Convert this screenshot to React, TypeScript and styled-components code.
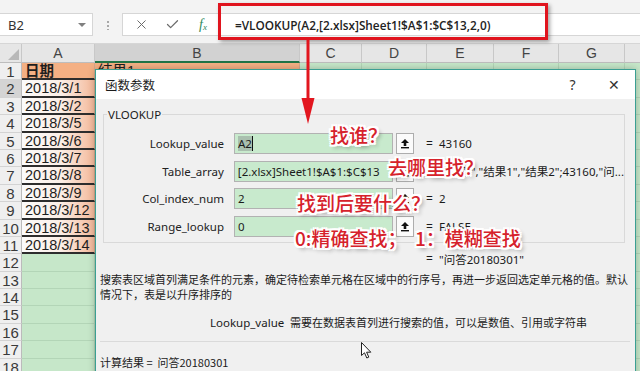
import React from "react";
import styled, { createGlobalStyle } from "styled-components";
import { X, Check } from "lucide-react";

const GlobalStyle = createGlobalStyle`
  html, body {
    margin: 0;
    padding: 0;
    background: #fff;
  }
  body {
    width: 640px;
    height: 371px;
    overflow: hidden;
    font-family: "Noto Sans", "Noto Sans CJK SC", sans-serif;
  }
`;

const Page = styled.div`
  position: relative;
  width: 640px;
  height: 371px;
  overflow: hidden;
  background: #c6e7c9;
`;

/* ---------- formula bar ---------- */

const TopBar = styled.div`
  height: 44px;
  box-sizing: border-box;
  padding-top: 13px;
  background: #f3f3f3;
  border-bottom: 1px solid #d6d6d6;
  display: flex;
  align-items: flex-start;
`;

const NameBox = styled.div`
  width: 93px;
  height: 23px;
  box-sizing: border-box;
  background: #fff;
  border: 1px solid #d6d6d6;
  border-left: none;
  display: flex;
  align-items: center;
  justify-content: space-between;
  padding: 0 6px 0 8px;
  font-size: 13px;
  color: #333;
`;

const DropCaret = styled.span`
  width: 0;
  height: 0;
  border-left: 4px solid transparent;
  border-right: 4px solid transparent;
  border-top: 4px solid #808080;
`;

const Grip = styled.div`
  width: 2px;
  height: 10px;
  margin: 7px 0 0 14px;
  background: radial-gradient(circle, #a8a8a8 0.8px, transparent 1px) 0 0 / 2px 4px repeat-y;
`;

const FormulaBox = styled.div`
  flex: 1;
  height: 23px;
  margin-left: 13px;
  box-sizing: border-box;
  background: #fff;
  border: 1px solid #d6d6d6;
  border-right: none;
  display: flex;
  align-items: center;
  padding-left: 10px;
`;

const IconSlot = styled.span<{ $gap?: number }>`
  width: 16px;
  display: flex;
  justify-content: center;
  margin-right: ${({ $gap }) => $gap ?? 15}px;
  color: #6b6b6b;
`;

const Fx = styled.span`
  font-family: "Liberation Serif", serif;
  font-style: italic;
  font-size: 14px;
  color: #2f8a5c;
  & sub {
    font-size: 9px;
    vertical-align: -1px;
  }
`;

const FormulaText = styled.span`
  margin-left: 24px;
  font-family: "Open Sans", "Noto Sans", sans-serif;
  font-weight: 600;
  font-size: 11.8px;
  color: #222;
  white-space: nowrap;
`;

const RedFrame = styled.div`
  position: absolute;
  left: 218px;
  top: 3px;
  width: 330px;
  height: 37px;
  box-sizing: border-box;
  border: 3px solid #e0141e;
  box-shadow: 2px 2px 4px rgba(0, 0, 0, 0.35);
`;

/* ---------- sheet ---------- */

const Sheet = styled.div`
  display: grid;
  grid-template-columns: 22px 73px 205px 62px 65px 67px 65px 66px 40px;
  grid-template-rows: 19px;
  grid-auto-rows: 17.4px;
  font-family: "Liberation Sans", "Noto Sans CJK SC", sans-serif;
`;

const Corner = styled.div`
  background: #e6e6e6;
  border-right: 1px solid #c8c8c8;
  border-bottom: 1px solid #bdbdbd;
  position: relative;
  &::after {
    content: "";
    position: absolute;
    right: 2px;
    bottom: 2px;
    border-left: 11px solid transparent;
    border-bottom: 11px solid #b8b8b8;
  }
`;

const ColHead = styled.div<{ $active?: boolean }>`
  background: ${({ $active }) => ($active ? "#d2d2d2" : "#e6e6e6")};
  border-right: 1px solid #c8c8c8;
  border-bottom: ${({ $active }) => ($active ? "2px solid #217346" : "1px solid #bdbdbd")};
  box-sizing: border-box;
  font-size: 14px;
  color: #444;
  text-align: center;
  line-height: 19px;
`;

const RowHead = styled.div<{ $active?: boolean }>`
  background: ${({ $active }) => ($active ? "#d4d4d4" : "#efefef")};
  border-right: 1px solid #bbb;
  border-bottom: 1px solid #d3d3d3;
  box-sizing: border-box;
  font-size: 15px;
  color: #3a3a3a;
  text-align: center;
  line-height: 17px;
  overflow: hidden;
`;

type Fill = "orange" | "fade" | "green" | "white";

const fills: Record<Fill, string> = {
  orange: "#f4b084",
  fade: "linear-gradient(to right, #fbfbfb 0%, #fbeee6 55%, #f4b99a 100%)",
  green: "#c6e7c9",
  white: "#ffffff",
};

const Cell = styled.div<{ $fill: Fill; $strong?: boolean; $ruled?: boolean }>`
  background: ${({ $fill }) => fills[$fill]};
  border-right: 1px solid ${({ $fill }) => ($fill === "green" ? "#b3d5b7" : "#d4a98d")};
  border-bottom: ${({ $ruled, $fill }) =>
    $ruled ? "2px solid #2d2d2d" : `1px solid ${$fill === "green" ? "#b3d5b7" : "#d4a98d"}`};
  box-sizing: border-box;
  padding-left: 3px;
  font-size: 14.5px;
  font-weight: ${({ $strong }) => ($strong ? 700 : 400)};
  color: #1e1e1e;
  line-height: 16px;
  white-space: nowrap;
  overflow: hidden;
`;

/* ---------- dialog ---------- */

const Dialog = styled.div`
  position: absolute;
  left: 95px;
  top: 69px;
  width: 541px;
  height: 320px;
  box-sizing: border-box;
  border: 1px solid #3b9f93;
  background: #f0f0f0;
  box-shadow: 0 0 7px rgba(0, 0, 0, 0.25);
  display: flex;
  flex-direction: column;
  color: #1b1b1b;
`;

const TitleBar = styled.div`
  height: 29px;
  flex-shrink: 0;
  background: #fff;
  display: flex;
  align-items: center;
  padding-left: 9px;
  font-family: "Noto Sans CJK SC", sans-serif;
  font-size: 12.5px;
`;

const TitleButtons = styled.div`
  margin-left: auto;
  display: flex;
  padding-right: 1px;
`;

const TitleButton = styled.span`
  width: 41px;
  text-align: center;
  font-family: "Noto Sans", sans-serif;
  font-size: 14px;
  color: #333;
`;

const Body = styled.div`
  padding: 0 10px 0 4px;
  display: flex;
  flex-direction: column;
`;

const GroupBox = styled.div`
  margin: 15px 0 0 3px;
  height: 129px;
  box-sizing: border-box;
  border: 1px solid #d9d9d9;
`;

const GroupTitle = styled.div`
  width: fit-content;
  margin: -8px 0 0 3px;
  padding: 0 1px;
  background: #f0f0f0;
  font-size: 11.5px;
  line-height: 16px;
`;

const ParamList = styled.div`
  margin-top: 10px;
  display: flex;
  flex-direction: column;
  gap: 6.5px;
`;

const ParamRow = styled.div`
  display: flex;
  align-items: center;
  height: 21px;
`;

const ParamLabel = styled.span`
  width: 120px;
  text-align: right;
  font-size: 11.5px;
  color: #222;
`;

const ParamInput = styled.div`
  margin-left: 10px;
  width: 159px;
  height: 21px;
  box-sizing: border-box;
  border: 1px solid #b2b2b2;
  background: #c8eacd;
  padding: 0 3px;
  display: flex;
  align-items: center;
  font-size: 11.5px;
  white-space: nowrap;
  overflow: hidden;
`;

const Selected = styled.span`
  background: #a9bfae;
  border-right: 1px solid #111;
`;

const RefButton = styled.span`
  margin-left: 3px;
  width: 18px;
  height: 21px;
  box-sizing: border-box;
  border: 1px solid #adadad;
  background: #fbfbfb;
  display: flex;
  align-items: center;
  justify-content: center;
`;

const Eq = styled.span<{ $flush?: boolean }>`
  margin-left: ${({ $flush }) => ($flush ? 0 : 12)}px;
  width: 13px;
  font-size: 12px;
`;

const ParamValue = styled.span`
  font-family: "Noto Sans", "Noto Sans CJK SC", sans-serif;
  font-size: 11.5px;
  white-space: nowrap;
`;

const ResultLine = styled.div`
  margin-top: 8px;
  padding-left: 326px;
  height: 15px;
  display: flex;
  align-items: center;
  font-size: 11.5px;
`;

const Description = styled.div`
  margin-top: 6px;
  font-family: "Noto Sans CJK SC", sans-serif;
  font-size: 11px;
  line-height: 14.5px;
  white-space: nowrap;
`;

const ArgHelp = styled.div`
  margin-top: 14px;
  padding-left: 110px;
  display: flex;
  align-items: center;
  height: 14px;
  white-space: nowrap;
`;

const ArgName = styled.span`
  width: 80px;
  font-size: 11.5px;
`;

const ArgText = styled.span`
  font-family: "Noto Sans CJK SC", sans-serif;
  font-size: 11px;
`;

const Divider = styled.div`
  margin: 12px -5px 0 0;
  height: 1px;
  background: #dadada;
`;

const Total = styled.div`
  margin-top: 13px;
  font-family: "Noto Sans CJK SC", sans-serif;
  font-size: 11px;
  line-height: 14px;
  white-space: pre;
`;

/* ---------- annotations ---------- */

const Note = styled.div<{ $x: number; $y: number }>`
  position: absolute;
  left: ${({ $x }) => $x}px;
  top: ${({ $y }) => $y}px;
  font-family: "Noto Sans CJK SC", sans-serif;
  font-weight: 500;
  font-size: 19px;
  line-height: 20px;
  color: #d6222b;
  white-space: pre;
  text-shadow:
    2px 0 0 #fff, -2px 0 0 #fff, 0 2px 0 #fff, 0 -2px 0 #fff,
    2px 2px 0 #fff, -2px -2px 0 #fff, 2px -2px 0 #fff, -2px 2px 0 #fff,
    3px 3px 4px rgba(0, 0, 0, 0.45);
`;

const Overlay = styled.svg<{ $x: number; $y: number }>`
  position: absolute;
  left: ${({ $x }) => $x}px;
  top: ${({ $y }) => $y}px;
  overflow: visible;
`;

const dates = [
  "2018/3/1",
  "2018/3/2",
  "2018/3/5",
  "2018/3/6",
  "2018/3/7",
  "2018/3/8",
  "2018/3/9",
  "2018/3/12",
  "2018/3/13",
  "2018/3/14",
];

const colNames = ["A", "B", "C", "D", "E", "F", "G", ""];

function SheetGrid() {
  const rows: React.ReactNode[] = [];
  for (let r = 1; r <= 18; r++) {
    rows.push(
      <RowHead key={`h${r}`} $active={r === 2}>
        {r}
      </RowHead>
    );
    for (let c = 0; c < 8; c++) {
      let fill: Fill = "green";
      let text = "";
      let strong = false;
      let ruled = false;
      if (r === 1 && c === 0) {
        fill = "orange";
        text = "日期";
        strong = true;
        ruled = true;
      } else if (r === 1 && c === 1) {
        fill = "orange";
        text = "结果1";
      } else if (r <= 11 && c === 0) {
        fill = "fade";
        text = dates[r - 2];
        ruled = true;
      } else if (r <= 11 && c === 1) {
        fill = "white";
      }
      rows.push(
        <Cell key={`${r}-${c}`} $fill={fill} $strong={strong} $ruled={ruled}>
          {text}
        </Cell>
      );
    }
  }
  return (
    <Sheet>
      <Corner />
      {colNames.map((n, i) => (
        <ColHead key={i} $active={n === "B"}>
          {n}
        </ColHead>
      ))}
      {rows}
    </Sheet>
  );
}

function RefIcon() {
  return (
    <svg width="10" height="11" viewBox="0 0 10 11">
      <path d="M5 1 L9 5 H6.3 V8 H3.7 V5 H1 Z" fill="#111" />
      <rect x="1" y="9" width="8" height="1.4" fill="#111" />
    </svg>
  );
}

const params = [
  { label: "Lookup_value", input: "A2", value: "43160" },
  { label: "Table_array", input: "[2.xlsx]Sheet1!$A$1:$C$13", value: '{"日期","结果1","结果2";43160,"问...' },
  { label: "Col_index_num", input: "2", value: "2" },
  { label: "Range_lookup", input: "0", value: "FALSE" },
];

function FunctionDialog() {
  return (
    <Dialog>
      <TitleBar>
        函数参数
        <TitleButtons>
          <TitleButton>?</TitleButton>
          <TitleButton>✕</TitleButton>
        </TitleButtons>
      </TitleBar>
      <Body>
        <GroupBox>
          <GroupTitle>VLOOKUP</GroupTitle>
          <ParamList>
            {params.map((p, i) => (
              <ParamRow key={p.label}>
                <ParamLabel>{p.label}</ParamLabel>
                <ParamInput>{i === 0 ? <Selected>{p.input}</Selected> : p.input}</ParamInput>
                <RefButton>
                  <RefIcon />
                </RefButton>
                <Eq>=</Eq>
                <ParamValue>{p.value}</ParamValue>
              </ParamRow>
            ))}
          </ParamList>
        </GroupBox>
        <ResultLine>
          <Eq $flush>=</Eq>
          <ParamValue>"问答20180301"</ParamValue>
        </ResultLine>
        <Description>
          搜索表区域首列满足条件的元素，确定待检索单元格在区域中的行序号，再进一步返回选定单元格的值。默认
          <br />
          情况下，表是以升序排序的
        </Description>
        <ArgHelp>
          <ArgName>Lookup_value</ArgName>
          <ArgText>需要在数据表首列进行搜索的值，可以是数值、引用或字符串</ArgText>
        </ArgHelp>
        <Divider />
        <Total>计算结果 =  问答20180301</Total>
      </Body>
    </Dialog>
  );
}

export default function App() {
  return (
    <Page>
      <GlobalStyle />
      <TopBar>
        <NameBox>
          B2
          <DropCaret />
        </NameBox>
        <Grip />
        <FormulaBox>
          <IconSlot>
            <X size={15} strokeWidth={1.6} />
          </IconSlot>
          <IconSlot>
            <Check size={15} strokeWidth={2} />
          </IconSlot>
          <IconSlot $gap={0}>
            <Fx>
              f<sub>x</sub>
            </Fx>
          </IconSlot>
          <FormulaText>=VLOOKUP(A2,[2.xlsx]Sheet1!$A$1:$C$13,2,0)</FormulaText>
        </FormulaBox>
      </TopBar>
      <SheetGrid />
      <RedFrame />
      <FunctionDialog />

      <Overlay $x={300} $y={40} width="16" height="88" viewBox="0 0 16 88">
        <line x1="8" y1="0" x2="8" y2="62" stroke="#e2161f" strokeWidth="3" />
        <path d="M1.5 58 L14.5 58 L8 84 Z" fill="#e2161f" />
      </Overlay>

      <Note $x={330} $y={125}>找谁？</Note>
      <Note $x={388} $y={157}>去哪里找？</Note>
      <Note $x={297} $y={193}>找到后要什么？</Note>
      <Note $x={295} $y={228}>0:精确查找；  1：模糊查找</Note>

      <Overlay $x={361} $y={342} width="11" height="17" viewBox="0 0 11 17">
        <path d="M0.5 0.5 L0.5 13.5 L3.5 10.8 L5.8 16 L7.8 15.1 L5.6 10.2 L9.8 10.2 Z" fill="#fff" stroke="#222" strokeWidth="1" />
      </Overlay>
    </Page>
  );
}
